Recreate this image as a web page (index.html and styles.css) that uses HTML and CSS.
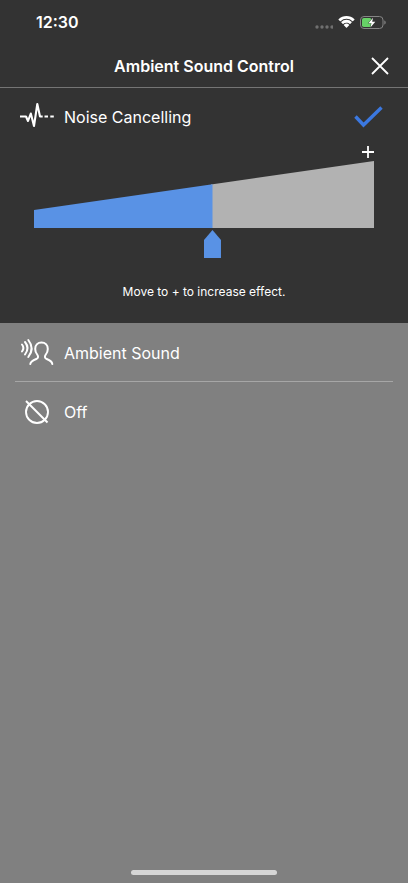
FILE: index.html
```html
<!DOCTYPE html>
<html lang="en">
<head>
<meta charset="utf-8">
<meta name="viewport" content="width=device-width, initial-scale=1">
<title>Ambient Sound Control</title>
<link rel="stylesheet" href="styles.css">
</head>
<body>
<div class="screen">
  <div class="status">
    <time class="clock">12:30</time>
    <div class="indicators">
      <svg class="dots" width="18" height="4" viewBox="0 0 18 4" aria-hidden="true"><circle cx="2" cy="2" r="1.7"/><circle cx="7" cy="2" r="1.7"/><circle cx="12" cy="2" r="1.7"/><circle cx="17" cy="2" r="1.7"/></svg>
      <svg width="17" height="12" viewBox="0 0 16 11" aria-hidden="true"><path fill="#fff" d="M8 2.500c2.100 0 4.100.8 5.600 2.300.1.1.3.1.4 0l1.500-1.500c.1-.1.1-.3 0-.4a10.800 10.800 0 0 0-15 0c-.1.1-.1.3 0 .4L2 4.800c.1.1.3.1.4 0A8.100 8.100 0 0 1 8 2.500zM8 6.100c1.200 0 2.300.4 3.100 1.200.1.1.3.1.4 0l1.500-1.500c.1-.1.1-.3 0-.4a7.200 7.200 0 0 0-10 0c-.1.1-.1.3 0 .4l1.500 1.500c.1.1.3.1.4 0A4.600 4.600 0 0 1 8 6.100zM10.500 8.500c.1-.1.1-.3 0-.4a3.700 3.700 0 0 0-5 0c-.1.1-.1.3 0 .4l2.300 2.300c.1.1.3.1.4 0z"/></svg>
      <svg width="26" height="13" viewBox="0 0 26 13" aria-hidden="true"><rect x=".5" y=".5" width="22.500" height="12" rx="3.500" fill="none" stroke="#858585"/><path fill="#858585" d="M24.300 4.500c1 .4 1.400 1.200 1.400 2s-.4 1.600-1.400 2z"/><rect x="2" y="2" width="9.500" height="9" rx="1.800" fill="#67d267"/><path fill="#fff" stroke="#333" stroke-width=".8" paint-order="stroke" d="M13 1.700 8.500 7.200h3L10.400 11.500 15.300 5.700h-3.100z"/></svg>
    </div>
  </div>
  <header class="header">
    <h1 class="title">Ambient Sound Control</h1>
    <button class="close" type="button" aria-label="Close"><svg width="18" height="18" viewBox="0 0 18 18" aria-hidden="true"><path d="M1 1 17 17M17 1 1 17" fill="none" stroke="#fff" stroke-width="1.800"/></svg></button>
  </header>
  <main>
    <section class="panel">
      <label class="option">
        <input class="radio" type="radio" name="mode" checked>
        <svg class="icon" width="36" height="32" viewBox="0 0 36 32" fill="none" stroke="#fff" stroke-width="2.100" aria-hidden="true"><path stroke-linejoin="round" d="M0 15.500H6L8 20 10.800 12.500 14 25 17.300 3 20 15.500H22.700"/><path d="M24.500 15.500h3.500M30.300 15.500h3.500"/></svg>
        <span class="name">Noise Cancelling</span>
        <svg class="check" width="30" height="24" viewBox="0 0 30 24" fill="none" stroke="#3b78e0" stroke-width="3.400" aria-hidden="true"><path d="M1.500 11.500 9.500 20 27.500 2.500"/></svg>
      </label>
      <div class="level">
        <span class="plus" aria-hidden="true"><svg width="12" height="12" viewBox="0 0 12 12"><path d="M0 6H12M6 0V12" stroke="#fff" stroke-width="1.800"/></svg></span>
        <svg class="wedge" viewBox="0 0 340 67" preserveAspectRatio="none" aria-hidden="true"><path fill="#b2b2b2" d="M177 23.500 340 0V67H177z"/><path fill="#5992e5" d="M0 49 178.500 23.300V67H0z"/></svg>
        <input class="slider" type="range" min="0" max="19" value="10" aria-label="Noise cancelling effect">
      </div>
      <p class="hint">Move to + to increase effect.</p>
    </section>
    <section class="others">
      <label class="option">
        <input class="radio" type="radio" name="mode">
        <svg class="icon" width="36" height="32" viewBox="0 0 36 32" fill="none" stroke="#fff" stroke-width="2" stroke-linecap="round" aria-hidden="true"><path d="M2 7.500Q4.800 11 2 14.500M5 5Q10 11 5 17.500M8.300 3Q15 11.500 8.300 20"/><path stroke-linejoin="round" d="M10.300 27C10.600 24.500 13 23.300 16.300 22 18.500 21.100 18.500 19.300 17.200 17.500 15.800 15.700 15.200 14.200 15.200 12 15.200 8 17.900 5.500 21.500 5.500S27.800 8 27.800 12C27.800 14.200 27.200 15.700 25.800 17.500 24.500 19.300 24.500 21.100 26.700 22 30 23.300 32 24.500 32.300 27"/></svg>
        <span class="name">Ambient Sound</span>
      </label>
      <label class="option">
        <input class="radio" type="radio" name="mode">
        <svg class="icon" width="36" height="32" viewBox="0 0 36 32" fill="none" stroke="#fff" stroke-width="1.900" aria-hidden="true"><circle cx="17" cy="16" r="11"/><path d="M6 5 27.500 26.500"/></svg>
        <span class="name">Off</span>
      </label>
    </section>
  </main>
  <div class="home"></div>
</div>
</body>
</html>
```

FILE: styles.css
```css
* {
  box-sizing: border-box;
}

body {
  margin: 0;
  background: #808080;
  color: #fff;
  font-family: Inter, "Liberation Sans", sans-serif;
}

svg {
  display: block;
}

.screen {
  display: flex;
  flex-direction: column;
  min-height: 100vh;
}

.status {
  display: flex;
  align-items: center;
  justify-content: space-between;
  height: 44px;
  padding: 0 22px 0 36px;
  background: #333;
}

.clock {
  font-size: 16px;
  font-weight: 600;
}

.indicators {
  display: flex;
  align-items: center;
  gap: 5px;
}

.dots {
  align-self: flex-end;
  fill: #707070;
}

.header {
  display: grid;
  grid-template-columns: 40px 1fr 40px;
  align-items: center;
  height: 44px;
  padding: 0 8px;
  background: #333;
  border-bottom: 1px solid #757575;
}

.title {
  grid-column: 2;
  margin: 0;
  font-size: 16px;
  font-weight: 600;
  text-align: center;
}

.close {
  display: grid;
  place-items: center;
  height: 40px;
  padding: 0;
  border: 0;
  background: none;
}

main {
  flex: 1;
}

.panel {
  padding-bottom: 23px;
  background: #333;
}

.option {
  display: flex;
  align-items: center;
  gap: 8px;
  height: 58px;
  padding: 0 24px 0 20px;
}

.radio {
  position: absolute;
  appearance: none;
  margin: 0;
}

.name {
  flex: 1;
  font-size: 16px;
}

.level {
  padding: 0 34px;
}

.plus {
  display: flex;
  justify-content: flex-end;
  height: 15px;
}

.wedge {
  width: 100%;
  height: 67px;
}

.slider {
  display: block;
  appearance: none;
  width: 100%;
  height: 28px;
  margin: 2px 0 0;
  background: none;
}

.slider::-webkit-slider-thumb {
  appearance: none;
  width: 17px;
  height: 28px;
  background: #5992e5;
  clip-path: polygon(50% 0, 100% 36%, 100% 100%, 0 100%, 0 36%);
}

.hint {
  margin: 25px 0 0;
  font-size: 12px;
  line-height: 17px;
  text-align: center;
}

.others {
  padding-top: 1px;
}

.others .option + .option {
  position: relative;
  height: 60px;
}

.others .option + .option::before {
  content: "";
  position: absolute;
  top: -1px;
  left: 15px;
  right: 15px;
  height: 1px;
  background: #a6a6a6;
}

.home {
  width: 146px;
  height: 5px;
  margin: 0 auto 8px;
  border-radius: 3px;
  background: #d6d6d6;
}
```
